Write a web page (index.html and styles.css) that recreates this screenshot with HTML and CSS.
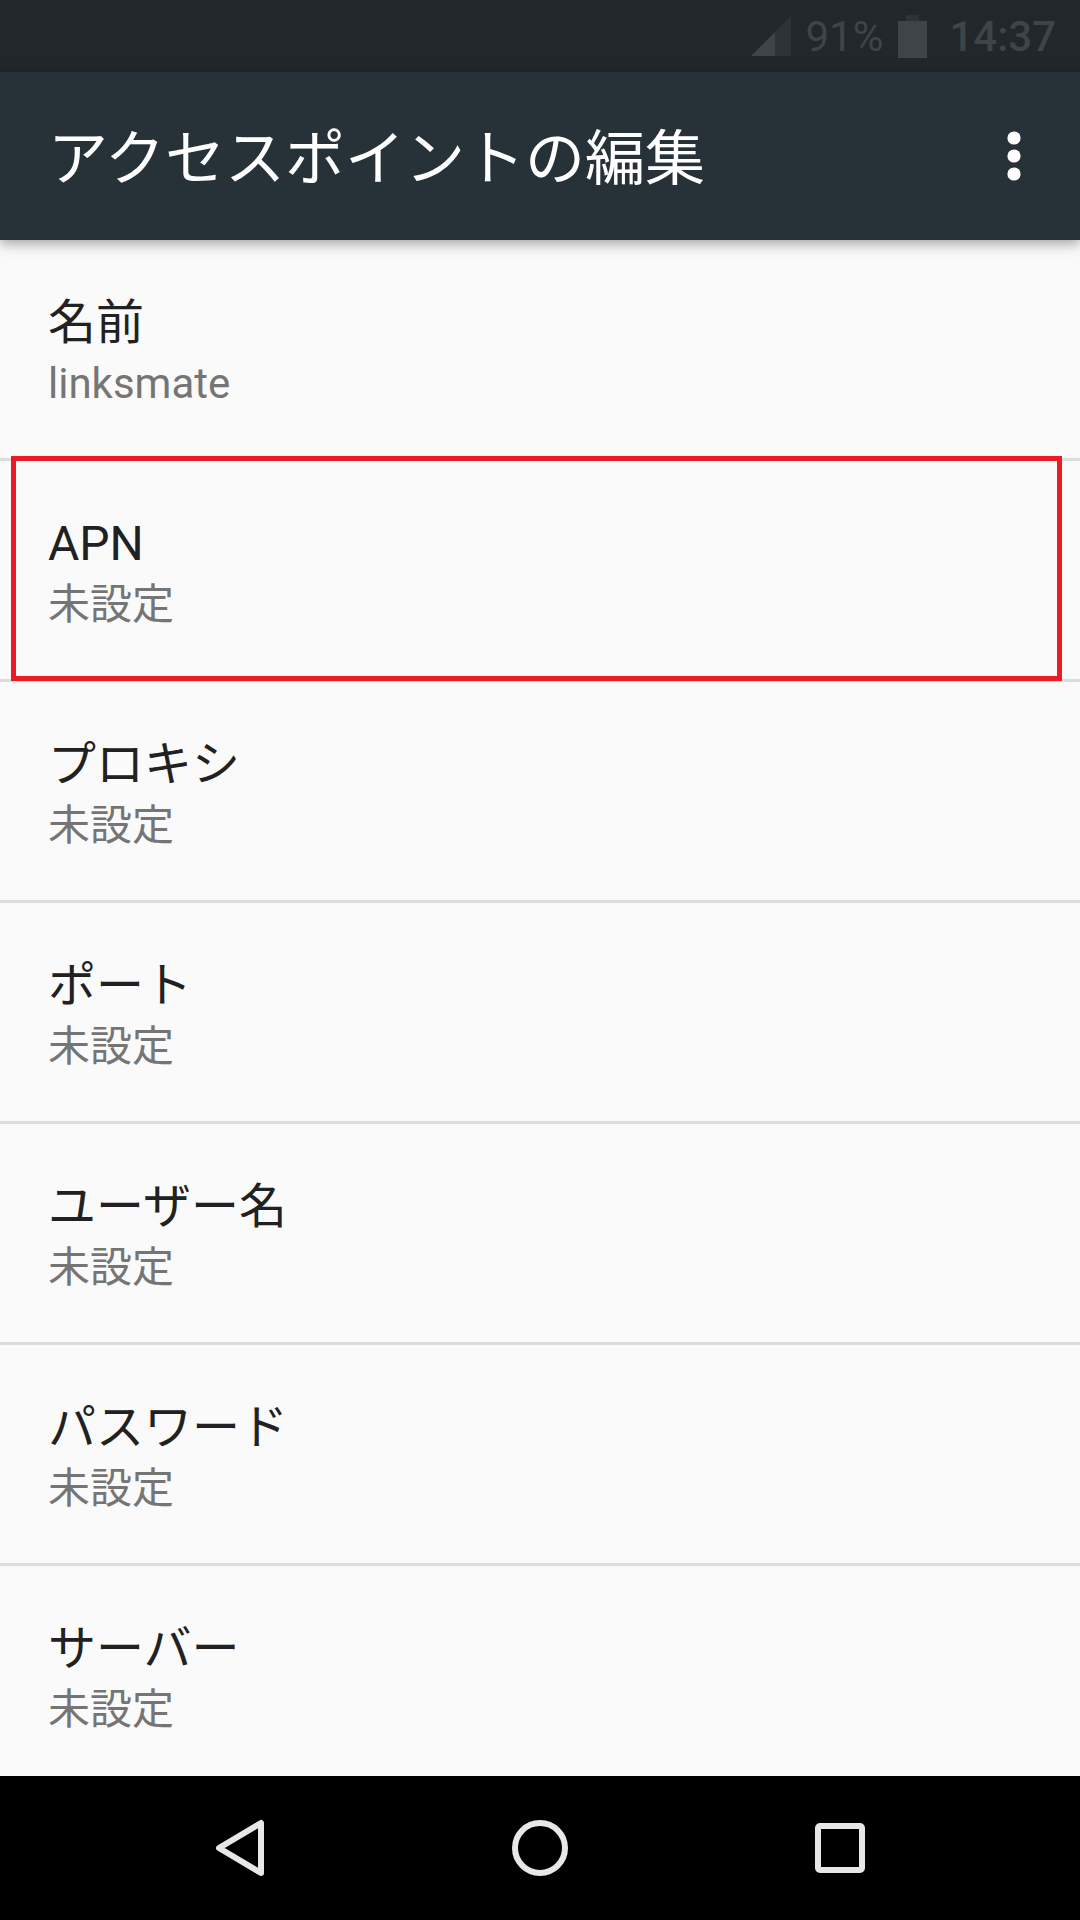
FILE: index.html
```html
<!DOCTYPE html>
<html lang="ja">

<head>
    <meta charset="UTF-8">
    <meta name="viewport" content="width=device-width, initial-scale=1.0">
    <title>アクセスポイントの編集</title>
    <link rel="stylesheet" href="styles.css">
</head>

<body>
    <div class="screen">

        <div class="status-bar">
            <svg class="signal" width="40" height="40" viewBox="0 0 40 40">
                <polygon class="signal-empty" points="40,0 40,40 24,40 24,16"></polygon>
                <polygon class="signal-fill" points="24,16 24,40 0,40"></polygon>
            </svg>
            <span class="percent">91%</span>
            <svg class="battery" width="29" height="43" viewBox="0 0 29 43">
                <rect class="signal-empty" x="8" y="0" width="13" height="6"></rect>
                <rect class="signal-fill" x="0" y="6" width="29" height="37"></rect>
            </svg>
            <span class="clock">14:37</span>
        </div>

        <div class="app-bar">
            <h1>アクセスポイントの編集</h1>
            <svg class="menu" width="72" height="72" viewBox="0 0 24 24">
                <circle cx="12" cy="6" r="2.2"></circle>
                <circle cx="12" cy="12" r="2.2"></circle>
                <circle cx="12" cy="18" r="2.2"></circle>
            </svg>
        </div>

        <div class="list">
            <div class="row">
                <div class="row-title">名前</div>
                <div class="row-value">linksmate</div>
            </div>
            <div class="row">
                <div class="row-title">APN</div>
                <div class="row-value">未設定</div>
                <div class="highlight"></div>
            </div>
            <div class="row">
                <div class="row-title">プロキシ</div>
                <div class="row-value">未設定</div>
            </div>
            <div class="row">
                <div class="row-title">ポート</div>
                <div class="row-value">未設定</div>
            </div>
            <div class="row">
                <div class="row-title">ユーザー名</div>
                <div class="row-value">未設定</div>
            </div>
            <div class="row">
                <div class="row-title">パスワード</div>
                <div class="row-value">未設定</div>
            </div>
            <div class="row">
                <div class="row-title">サーバー</div>
                <div class="row-value">未設定</div>
            </div>
        </div>

        <div class="nav-bar">
            <svg width="72" height="72" viewBox="0 0 72 72">
                <polygon points="15,36 57,11 57,61"></polygon>
            </svg>
            <svg width="72" height="72" viewBox="0 0 72 72">
                <circle cx="36" cy="36" r="25"></circle>
            </svg>
            <svg width="72" height="72" viewBox="0 0 72 72">
                <rect x="14" y="14" width="44" height="44" rx="2"></rect>
            </svg>
        </div>

    </div>
</body>

</html>
```

FILE: styles.css
```css
body {
    margin: 0;
    background-color: #fafafa;
    font-family: Roboto, "Noto Sans CJK JP", sans-serif;
}

.screen {
    display: flex;
    flex-direction: column;
    width: 1080px;
    height: 1920px;
    overflow: hidden;
}

.status-bar {
    display: flex;
    align-items: center;
    justify-content: flex-end;
    flex: none;
    height: 72px;
    padding-right: 24px;
    box-sizing: border-box;
    background: #21272b;
    color: #3e4447;
    font-size: 42px;
    font-weight: 400;
}

.signal-fill {
    fill: #3e4447;
}

.signal-empty {
    fill: #2d3337;
}

.signal {
    margin-right: 14px;
}

.percent {
    margin-right: 15px;
}

.battery {
    margin-right: 22px;
}

.clock {
    font-weight: 500;
}

.app-bar {
    display: flex;
    align-items: center;
    justify-content: space-between;
    flex: none;
    position: relative;
    z-index: 1;
    height: 168px;
    padding: 0 30px 0 48px;
    background: #263238;
    box-shadow: 0 4px 12px rgba(0, 0, 0, 0.35);
}

.app-bar h1 {
    margin: 0 0 6px;
    color: #ffffff;
    font-size: 60px;
    font-weight: 400;
}

.menu circle {
    fill: #ffffff;
}

.list {
    flex: 1;
    overflow: hidden;
}

.row {
    display: flex;
    flex-direction: column;
    justify-content: center;
    position: relative;
    height: 221px;
    padding: 5px 48px 0;
    box-sizing: border-box;
    border-bottom: 3px solid #dcdcdc;
}

.row-title {
    margin-bottom: 1px;
    color: #212121;
    font-size: 48px;
    line-height: 64px;
}

.row-value {
    color: #757575;
    font-size: 42px;
    line-height: 56px;
}

.highlight {
    position: absolute;
    top: -5px;
    left: 11px;
    right: 18px;
    bottom: -2px;
    border: 5px solid #ed1c24;
}

.nav-bar {
    display: flex;
    align-items: center;
    justify-content: center;
    gap: 228px;
    flex: none;
    height: 144px;
    background: #000000;
}

.nav-bar svg * {
    fill: none;
    stroke: #e8e8e8;
    stroke-width: 6;
    stroke-linejoin: round;
}
```
